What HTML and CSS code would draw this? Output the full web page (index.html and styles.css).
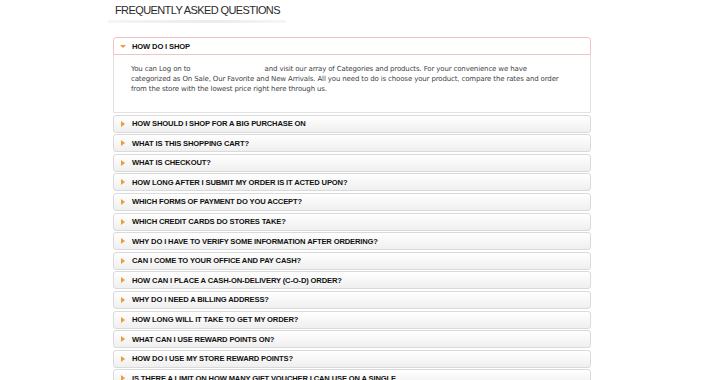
FILE: index.html
```html
<!DOCTYPE html>
<html lang="en">
<head>
  <meta charset="UTF-8" />
  <meta name="viewport" content="width=device-width, initial-scale=1.0" />
  <title>Frequently Asked Questions</title>
  <link rel="stylesheet" href="styles.css">
</head>
<body>
<div class="faq">
  <h1 class="faq__title">FREQUENTLY ASKED QUESTIONS</h1>
  <div class="faq__list">
    <div class="faq__item faq__item--open">
      <div class="faq__head"><span class="faq__arrow"></span>HOW DO I SHOP</div>
      <div class="faq__body">
        You can Log on to <span class="faq__link"></span> and visit our array of Categories and products. For your convenience we have<br>
        categorized as On Sale, Our Favorite and New Arrivals. All you need to do is choose your product, compare the rates and order<br>
        from the store with the lowest price right here through us.
      </div>
    </div>
    <div class="faq__item"><div class="faq__head"><span class="faq__arrow"></span>HOW SHOULD I SHOP FOR A BIG PURCHASE ON</div></div>
    <div class="faq__item"><div class="faq__head"><span class="faq__arrow"></span>WHAT IS THIS SHOPPING CART?</div></div>
    <div class="faq__item"><div class="faq__head"><span class="faq__arrow"></span>WHAT IS CHECKOUT?</div></div>
    <div class="faq__item"><div class="faq__head"><span class="faq__arrow"></span>HOW LONG AFTER I SUBMIT MY ORDER IS IT ACTED UPON?</div></div>
    <div class="faq__item"><div class="faq__head"><span class="faq__arrow"></span>WHICH FORMS OF PAYMENT DO YOU ACCEPT?</div></div>
    <div class="faq__item"><div class="faq__head"><span class="faq__arrow"></span>WHICH CREDIT CARDS DO STORES TAKE?</div></div>
    <div class="faq__item"><div class="faq__head"><span class="faq__arrow"></span>WHY DO I HAVE TO VERIFY SOME INFORMATION AFTER ORDERING?</div></div>
    <div class="faq__item"><div class="faq__head"><span class="faq__arrow"></span>CAN I COME TO YOUR OFFICE AND PAY CASH?</div></div>
    <div class="faq__item"><div class="faq__head"><span class="faq__arrow"></span>HOW CAN I PLACE A CASH-ON-DELIVERY (C-O-D) ORDER?</div></div>
    <div class="faq__item"><div class="faq__head"><span class="faq__arrow"></span>WHY DO I NEED A BILLING ADDRESS?</div></div>
    <div class="faq__item"><div class="faq__head"><span class="faq__arrow"></span>HOW LONG WILL IT TAKE TO GET MY ORDER?</div></div>
    <div class="faq__item"><div class="faq__head"><span class="faq__arrow"></span>WHAT CAN I USE REWARD POINTS ON?</div></div>
    <div class="faq__item"><div class="faq__head"><span class="faq__arrow"></span>HOW DO I USE MY STORE REWARD POINTS?</div></div>
    <div class="faq__item"><div class="faq__head"><span class="faq__arrow"></span>IS THERE A LIMIT ON HOW MANY GIFT VOUCHER I CAN USE ON A SINGLE</div></div>
  </div>
</div>
</body>
</html>
```

FILE: styles.css
```css
* {
  box-sizing: border-box;
}
html {
  font-family: "Liberation Sans", Arial, sans-serif;
  color: #222;
  background: #fff;
}
body {
  margin: 0;
}
.faq {
  width: 478px;
  margin-left: 113px;
}
.faq__title {
  margin: 0 0 0 -5px;
  padding: 3px 0 0 7px;
  width: 178px;
  height: 25px;
  font-size: 11px;
  line-height: 14px;
  font-weight: normal;
  letter-spacing: -0.6px;
  white-space: nowrap;
  color: #2a2a2a;
  background: linear-gradient(to right, #f5f5f5, #ebebeb 60%, #f6f6f6) no-repeat 0 20px / 100% 3px;
}
.faq__list {
  margin-top: 12px;
}
.faq__item {
  margin-bottom: 1.6px;
}
.faq__head {
  display: flex;
  align-items: center;
  height: 18px;
  padding-left: 7px;
  border: 1px solid #dadada;
  border-radius: 3px;
  background: linear-gradient(to bottom, #ffffff, #efefef);
  font-size: 7.6px;
  font-weight: bold;
  letter-spacing: -0.15px;
  color: #111;
  white-space: nowrap;
  overflow: hidden;
}
.faq__arrow {
  width: 0;
  height: 0;
  margin-right: 7px;
  border-top: 3px solid transparent;
  border-bottom: 3px solid transparent;
  border-left: 4px solid #f09a38;
}
.faq__item--open .faq__head {
  border-color: #f1c4c4;
  background: #fff;
  border-radius: 3px 3px 0 0;
}
.faq__item--open .faq__arrow {
  margin-left: -1px;
  margin-right: 6px;
  border-left: 3px solid transparent;
  border-right: 3px solid transparent;
  border-top: 3px solid #f09a38;
  border-bottom: 0;
}
.faq__body {
  height: 58px;
  padding: 9px 10px 0 17px;
  border: 1px solid #e2e2e2;
  border-top: 0;
  font-family: "DejaVu Sans", Tahoma, sans-serif;
  font-size: 7px;
  letter-spacing: -0.14px;
  line-height: 10px;
  color: #444;
  white-space: nowrap;
}
.faq__link {
  display: inline-block;
  width: 70px;
}
```
